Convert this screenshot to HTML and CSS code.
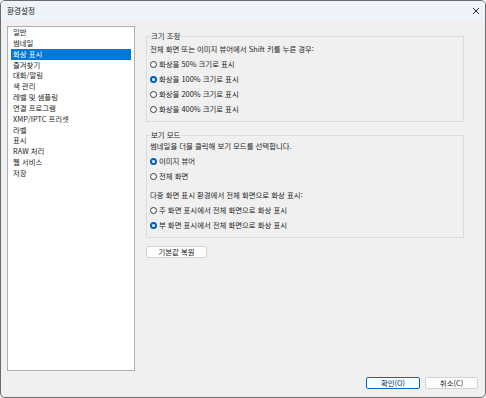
FILE: index.html
```html
<!DOCTYPE html>
<html lang="ko">
<head>
<meta charset="utf-8">
<title>환경설정</title>
<link rel="stylesheet" href="styles.css">
</head>
<body>
<div class="window">
  <div class="titlebar">
    <span class="title">환경설정</span>
    <svg class="close" width="8" height="8" viewBox="0 0 8 8"><path d="M1 1L7 7M7 1L1 7" stroke="#2b2b2b" stroke-width="1"/></svg>
  </div>
  <div class="content">
    <ul class="list">
      <li>일반</li>
      <li>썸네일</li>
      <li class="sel">화상 표시</li>
      <li>즐겨찾기</li>
      <li>대화/알림</li>
      <li>색 관리</li>
      <li>레벨 및 샘플링</li>
      <li>연결 프로그램</li>
      <li>XMP/IPTC 프리셋</li>
      <li>라벨</li>
      <li>표시</li>
      <li>RAW 처리</li>
      <li>웹 서비스</li>
      <li>저장</li>
    </ul>
    <div class="panel">
      <fieldset class="group g1">
        <legend>크기 조정</legend>
        <p class="line">전체 화면 또는 이미지 뷰어에서 Shift 키를 누른 경우:</p>
        <label class="opt"><span class="radio"></span>화상을 50% 크기로 표시</label>
        <label class="opt"><span class="radio on"></span>화상을 100% 크기로 표시</label>
        <label class="opt"><span class="radio"></span>화상을 200% 크기로 표시</label>
        <label class="opt"><span class="radio"></span>화상을 400% 크기로 표시</label>
      </fieldset>
      <fieldset class="group g2">
        <legend>보기 모드</legend>
        <p class="line">썸네일을 더블 클릭해 보기 모드를 선택합니다.</p>
        <label class="opt"><span class="radio on"></span>이미지 뷰어</label>
        <label class="opt"><span class="radio"></span>전체 화면</label>
        <p class="line line2">다중 화면 표시 환경에서 전체 화면으로 화상 표시:</p>
        <label class="opt"><span class="radio"></span>주 화면 표시에서 전체 화면으로 화상 표시</label>
        <label class="opt"><span class="radio on"></span>부 화면 표시에서 전체 화면으로 화상 표시</label>
      </fieldset>
      <button class="btn reset">기본값 복원</button>
    </div>
  </div>
  <div class="footer">
    <button class="btn ok">확인(O)</button>
    <button class="btn cancel">취소(C)</button>
  </div>
</div>
</body>
</html>
```
FILE: styles.css
```css
* { box-sizing: border-box; }
html, body { margin: 0; padding: 0; }
body {
  width: 486px;
  height: 398px;
  background: #f0f0f0;
  font-family: "Noto Sans CJK KR", "Noto Sans", sans-serif;
  font-size: 7.4px;
  color: #1c1c1c;
  overflow: hidden;
}
.window {
  width: 486px;
  height: 398px;
  border: 1px solid #6b6b6b;
  border-radius: 5px;
  background: #f0f0f0;
  display: flex;
  flex-direction: column;
  overflow: hidden;
}
.titlebar {
  height: 19px;
  flex: none;
  background: #eef3fa;
  display: flex;
  align-items: center;
  justify-content: space-between;
  padding: 0 5px 0 6px;
}
.title { font-size: 7.6px; color: #222; line-height: 1; }
.close { display: block; }
.content {
  display: flex;
  padding: 6px 0 0 6px;
  height: 351px;
  flex: none;
}
.list {
  margin: 0;
  padding: 0 3px;
  list-style: none;
  width: 128px;
  height: 345px;
  background: #fff;
  border: 1px solid #a9b0b8;
  flex: none;
}
.list li {
  height: 10.85px;
  line-height: 10.85px;
  padding-left: 2px;
  white-space: nowrap;
}
.list li.sel { background: #0078d7; color: #fff; }
.panel {
  margin-left: 11px;
  width: 318px;
  display: flex;
  flex-direction: column;
  align-items: flex-start;
}
.group {
  margin: 0;
  width: 318px;
  min-width: 0;
  border: 1px solid #dcdcdc;
  padding: 0 3px 0 3px;
}
.group legend {
  padding: 0 1px;
  line-height: 10px;
  margin-left: 0;
}
.g1 { margin-top: 5px; height: 91px; }
.g2 { margin-top: 8px; height: 108px; }
.line { margin: 0; line-height: 10px; height: 10px; }
.g1 .line { margin-top: 3px; }
.g2 .line { margin-top: 1px; }
.g2 .line2 { margin-top: 9px; }
.opt {
  display: flex;
  align-items: center;
  height: 10px;
  margin-top: 5px;
  line-height: 10px;
}
.g1 .line + .opt { margin-top: 5px; }
.radio {
  width: 7px;
  height: 7px;
  border-radius: 50%;
  border: 1px solid #3a3a3a;
  background: #fff;
  margin-right: 2px;
  flex: none;
}
.radio.on {
  border: 2px solid #005fb8;
  background: #fff;
}
.btn {
  font-family: inherit;
  font-size: 7.4px;
  color: #1c1c1c;
  background: #fdfdfd;
  border: 1px solid #d3d3d3;
  border-radius: 2px;
  height: 12px;
  padding: 0;
  line-height: 10px;
}
.reset { width: 61px; margin-top: 8px; }
.footer {
  display: flex;
  justify-content: flex-end;
  gap: 5px;
  padding: 6px 7px 0 0;
}
.ok { width: 54px; border-color: #0067c0; }
.cancel { width: 53px; }
```
